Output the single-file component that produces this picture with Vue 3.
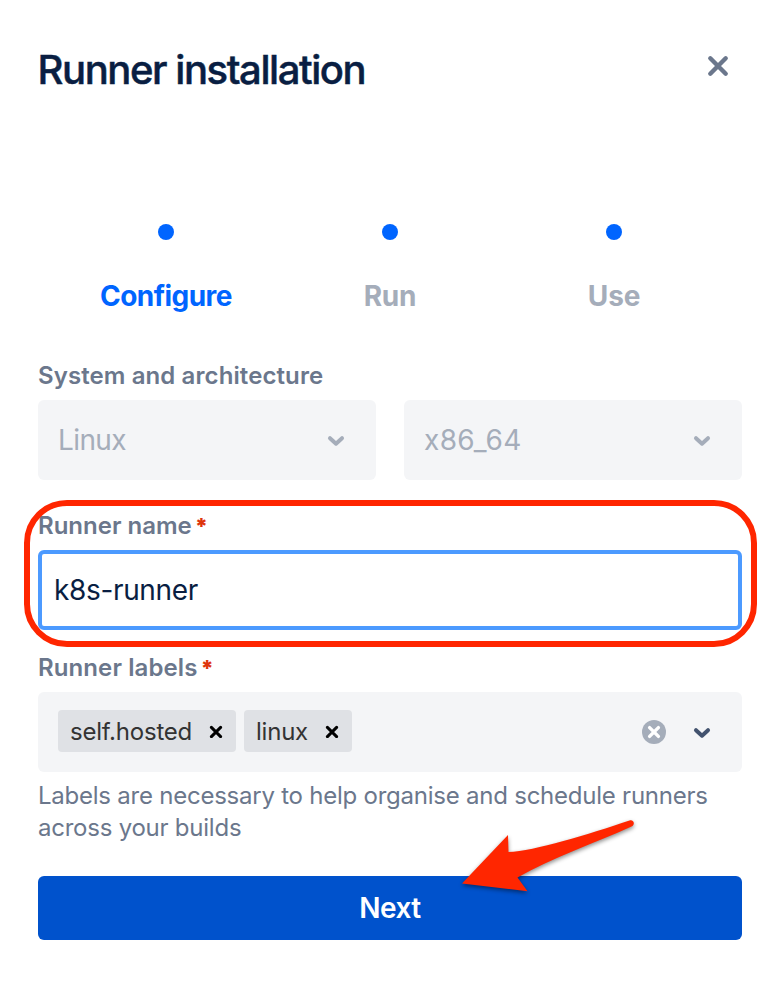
<script setup>
const steps = [
  { name: 'Configure', active: true },
  { name: 'Run', active: false },
  { name: 'Use', active: false },
]
const systems = [
  { value: 'Linux', cls: 'os' },
  { value: 'x86_64', cls: 'arch' },
]
const labels = [
  { text: 'self.hosted', cls: 'tag-hosted' },
  { text: 'linux', cls: 'tag-linux' },
]
</script>

<template>
  <main class="dialog">
    <header class="header">
      <h1><span>Runner installation</span></h1>
      <svg class="close" width="24" height="24" viewBox="0 0 24 24">
        <path d="M4.3 4.3 19.7 19.7M19.7 4.3 4.3 19.7" />
      </svg>
    </header>

    <ol class="steps">
      <li v-for="s in steps" :key="s.name" :class="{ active: s.active }">
        <i class="dot"></i>
        <span :class="'step-' + s.name.toLowerCase()">{{ s.name }}</span>
      </li>
    </ol>

    <div class="label system"><span>System and architecture</span></div>
    <div class="selects">
      <div v-for="s in systems" :key="s.value" class="select">
        <span :class="s.cls">{{ s.value }}</span>
        <svg class="chevron" width="24" height="24" viewBox="0 0 24 24">
          <path d="M6 10.200 12 15.700 18 10.200" />
        </svg>
      </div>
    </div>

    <section class="name-field">
      <div class="label name"><span>Runner name</span><b>*</b></div>
      <div class="input"><span>k8s-runner</span></div>
      <div class="highlight"></div>
    </section>

    <div class="label labels"><span>Runner labels</span><b>*</b></div>
    <div class="multi">
      <div v-for="l in labels" :key="l.text" class="tag" :class="l.cls">
        <span>{{ l.text }}</span>
        <svg width="14" height="14" viewBox="0 0 14 14">
          <path d="M2.4 3.4 11.600 12.600M11.600 3.4 2.4 12.600" />
        </svg>
      </div>
      <svg class="clear" width="24" height="24" viewBox="0 0 24 24">
        <circle cx="12" cy="12" r="12" />
        <path d="M7.6 7.6 16.4 16.4M16.4 7.6 7.6 16.4" />
      </svg>
      <svg class="chevron dark" width="24" height="24" viewBox="0 0 24 24">
        <path d="M6 10.200 12 15.700 18 10.200" />
      </svg>
    </div>
    <p class="hint"><span>Labels are necessary to help organise and schedule runners</span><br /><span>across your builds</span></p>

    <div class="actions">
      <button class="next"><span>Next</span></button>
      <svg class="arrow" width="190" height="90" viewBox="0 0 190 90">
        <path d="M12 73.5 58 25 58.500 42C84 41 139 24 179.500 10.400C184 9.200 185.500 14.500 181.500 16.500C145 33 101 48 67.500 67.500L77.500 81.200Z" />
      </svg>
    </div>
  </main>
</template>

<style>
body {
  background: #fff;
}
</style>

<style scoped>
* {
  box-sizing: border-box;
}
.dialog {
  width: 782px;
  height: 1002px;
  padding: 46px 40px 0 38px;
  font-family: Inter, 'Liberation Sans', sans-serif;
  color: #091e42;
  overflow: hidden;
  white-space: nowrap;
}
.header {
  height: 48px;
  display: flex;
  justify-content: space-between;
}
h1 {
  margin: 0 0 0 -0.5px;
  font-size: 40px;
  line-height: 48px;
  font-weight: 500;
  letter-spacing: -1.42px;
  -webkit-text-stroke: 0.5px #091e42;
}
.close {
  margin: 8px 12px 0 0;
}
.close path {
  fill: none;
  stroke: #6b778c;
  stroke-width: 4.4;
  stroke-linecap: round;
}
.steps {
  list-style: none;
  margin: 130px 0 0;
  padding: 0 16px;
  display: grid;
  grid-template-columns: repeat(3, 224px);
}
.steps li {
  display: flex;
  flex-direction: column;
  align-items: center;
  color: #a5adba;
  font-size: 28px;
  line-height: 40px;
  font-weight: 650;
  letter-spacing: -0.2px;
}
.steps li.active {
  color: #0065ff;
}
.step-configure {
  letter-spacing: -0.55px;
}
.dot {
  width: 16px;
  height: 16px;
  margin-bottom: 36px;
  border-radius: 50%;
  background: #0065ff;
}
.label {
  height: 32px;
  line-height: 32px;
  font-size: 24px;
  font-weight: 600;
  letter-spacing: 0.1px;
  color: #6b778c;
  display: flex;
}
.label.name {
  letter-spacing: 0;
}
.label b {
  margin-left: 3px;
  color: #de350b;
  font-weight: 900;
  font-size: 22px;
}
.system {
  margin-top: 44px;
}
.selects {
  margin-top: 8px;
  display: grid;
  grid-template-columns: 1fr 1fr;
  gap: 28px;
}
.select {
  height: 80px;
  padding: 0 28px 0 20px;
  border-radius: 6px;
  background: #f4f5f7;
  display: flex;
  align-items: center;
  justify-content: space-between;
  font-size: 28px;
  color: #a5adba;
}
.os {
  letter-spacing: -0.6px;
}
.arch {
  letter-spacing: 0.35px;
}
.chevron path {
  fill: none;
  stroke: #a5adba;
  stroke-width: 4;
  stroke-linecap: round;
  stroke-linejoin: round;
}
.chevron.dark path {
  stroke: #42526e;
}
.name-field {
  position: relative;
  margin-top: 30px;
}
.input {
  margin-top: 8px;
  height: 80px;
  border: 4px solid #4c9aff;
  border-radius: 6px;
  padding-left: 12px;
  font-size: 28px;
  line-height: 72px;
  letter-spacing: -0.35px;
}
.highlight {
  position: absolute;
  left: -14px;
  top: -10px;
  width: 733px;
  height: 147px;
  border: 6px solid #ff2600;
  border-radius: 43px;
}
.labels {
  margin-top: 22px;
}
.multi {
  margin-top: 8px;
  height: 80px;
  padding: 0 28px 0 20px;
  border-radius: 6px;
  background: #f4f5f7;
  display: flex;
  align-items: center;
  gap: 8px;
}
.tag {
  height: 42px;
  margin-top: -2px;
  padding: 0 13px 0 12px;
  border-radius: 4px;
  background: #dfe1e5;
  color: #333;
  font-size: 24px;
  letter-spacing: -0.22px;
  display: flex;
  align-items: center;
  justify-content: space-between;
}
.tag-hosted {
  width: 178px;
}
.tag-linux {
  width: 108px;
}
.tag path {
  fill: none;
  stroke: #000;
  stroke-width: 3;
  stroke-linecap: round;
}
.clear {
  margin: 0 16px 0 auto;
}
.clear circle {
  fill: #a5adba;
}
.clear path {
  fill: none;
  stroke: #fff;
  stroke-width: 3.4;
  stroke-linecap: round;
}
.multi .chevron {
  flex: none;
}
.hint {
  margin: 8px 0 0;
  font-size: 24px;
  line-height: 32px;
  letter-spacing: -0.235px;
  color: #6b778c;
}
.actions {
  position: relative;
  margin-top: 32px;
}
.next {
  display: block;
  width: 100%;
  height: 64px;
  padding: 0;
  border: 0;
  border-radius: 6px;
  background: #0052cc;
  color: #fff;
  font: 600 28px/64px Inter, 'Liberation Sans', sans-serif;
  letter-spacing: -0.5px;
}
.arrow {
  position: absolute;
  left: 412px;
  top: -66px;
}
.arrow path {
  fill: #ff2600;
  filter: drop-shadow(0 2px 2px rgba(0, 0, 0, 0.45));
}
</style>
